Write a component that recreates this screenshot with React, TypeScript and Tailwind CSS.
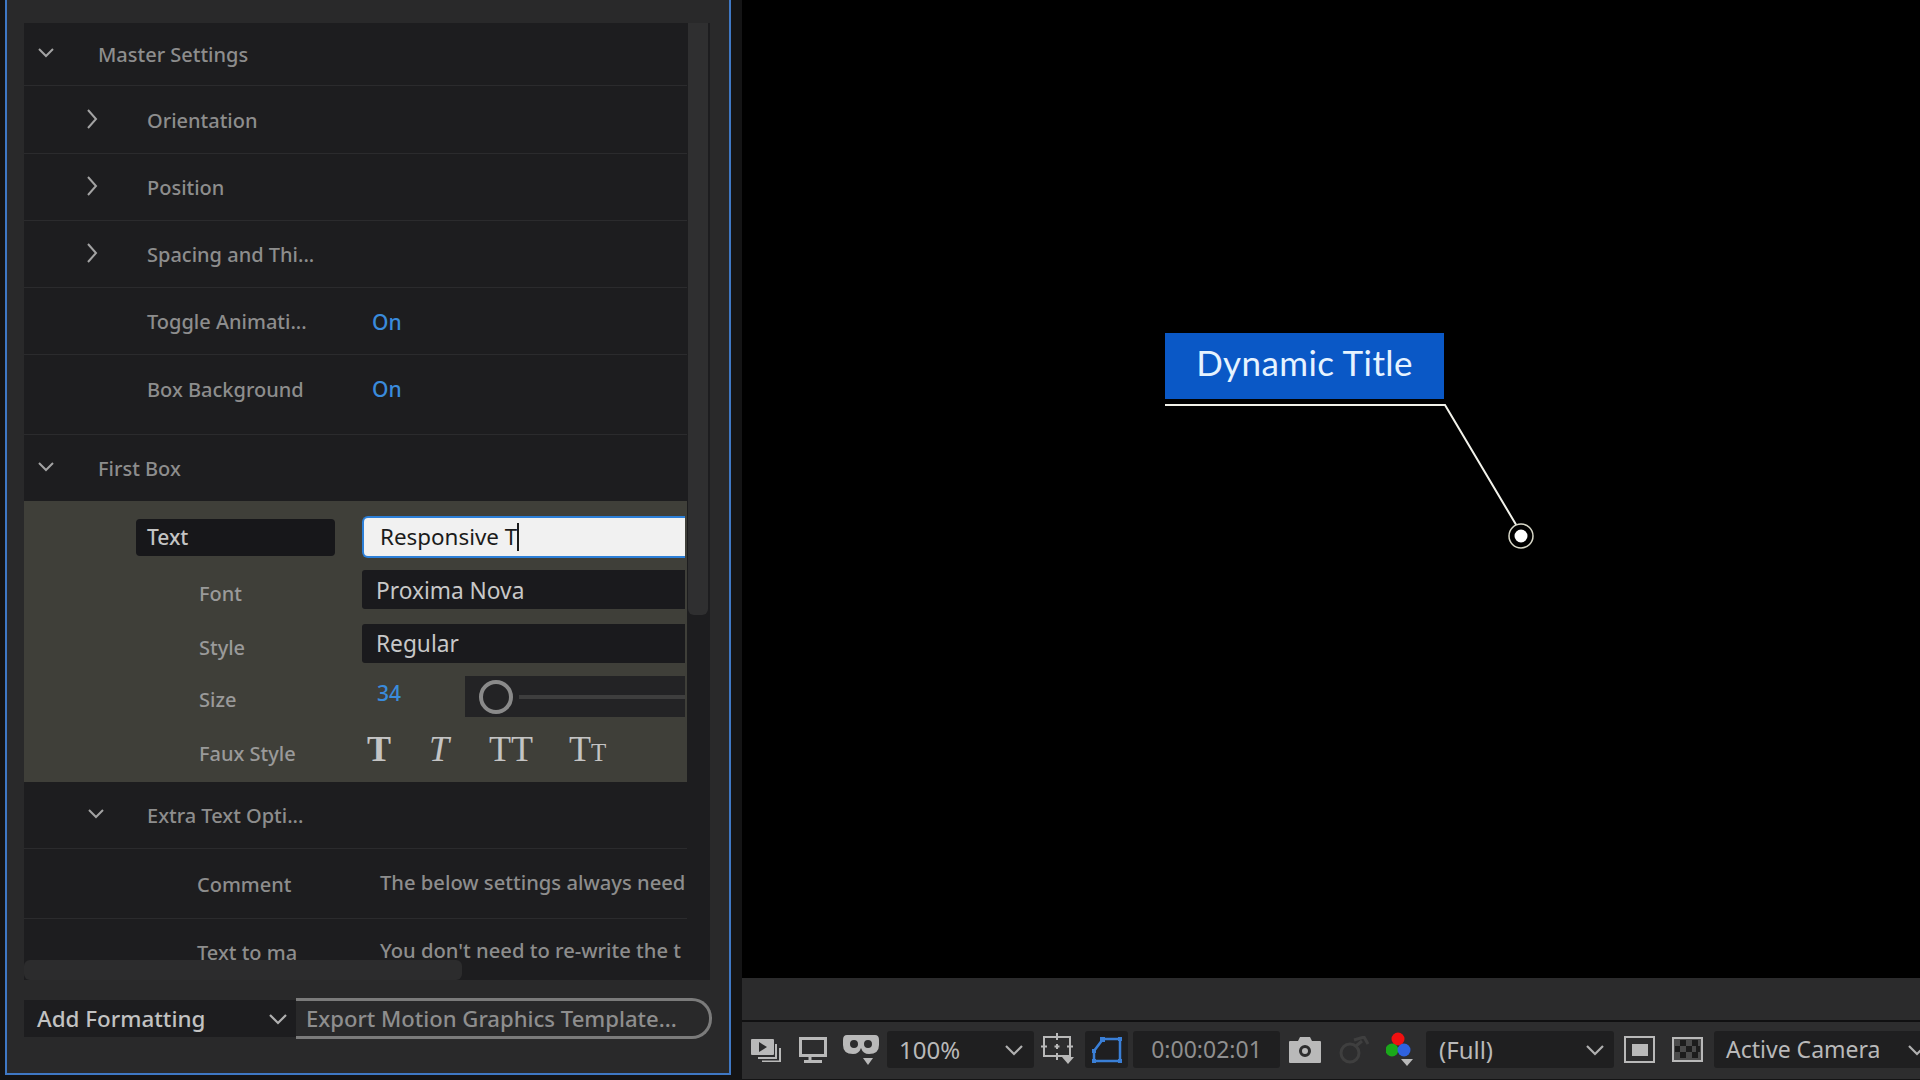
import { ReactNode } from 'react';

const FONT = "font-['Noto_Sans','Open_Sans',sans-serif]";

function Chevron({ down }: { down?: boolean }) {
    return (
        <svg width="20" height="20" viewBox="0 0 20 20" fill="none" stroke="#a3a3a3" strokeWidth="2">
            {down ? <path d="M3 6 L10 13 L17 6" /> : <path d="M6 1 L14 10 L6 19" />}
        </svg>
    );
}

function Row({
    label,
    indent,
    chevronX,
    down,
    height = 67,
    border = true,
    children,
}: {
    label: string;
    indent: string;
    chevronX?: string;
    down?: boolean;
    height?: number;
    border?: boolean;
    children?: ReactNode;
}) {
    return (
        <div
            className={`relative flex items-center shrink-0 ${border ? 'border-b border-[#2b2b2d]' : ''}`}
            style={{ height }}
        >
            {chevronX && (
                <span className={`absolute top-1/2 -translate-y-[11px] ${chevronX}`}>
                    <Chevron down={down} />
                </span>
            )}
            <span className={`text-[20px] font-medium text-[#8d8d8d] whitespace-nowrap pt-[2px] ${indent}`}>{label}</span>
            {children}
        </div>
    );
}

function OnValue() {
    return <span className="absolute left-[348px] text-[21px] font-medium text-[#3a8bdc] pt-[3px]">On</span>;
}

function DownChevronSmall() {
    return (
        <svg width="18" height="12" viewBox="0 0 18 12" fill="none" stroke="#b0b0b0" strokeWidth="2.2">
            <path d="M1 2 L9 10 L17 2" />
        </svg>
    );
}

function Toolbar() {
    return (
        <div className="flex items-center h-[57px] bg-[#2d2d2e] text-[#b9b9b9] overflow-hidden pb-[2px]">
            {/* previews */}
            <svg className="ml-[9px] shrink-0" width="30" height="24" viewBox="0 0 30 24" fill="none">
                <rect x="0" y="1" width="23" height="16" rx="1" fill="#b9b9b9" />
                <path d="M8 4 L16 9 L8 14 Z" fill="#2d2d2e" />
                <path d="M25 6 V20 H7" stroke="#b9b9b9" strokeWidth="2" />
                <path d="M29 10 V23.5 H11" stroke="#b9b9b9" strokeWidth="2" />
            </svg>
            {/* monitor */}
            <svg className="ml-[18px] shrink-0" width="28" height="26" viewBox="0 0 28 26" fill="none">
                <rect x="1.5" y="1.5" width="25" height="17" stroke="#b9b9b9" strokeWidth="3" />
                <path d="M11 19 V23 M5 24.5 H23" stroke="#b9b9b9" strokeWidth="3" />
            </svg>
            {/* goggles */}
            <div className="relative ml-[16px] w-[36px] h-[32px] shrink-0">
                <svg width="36" height="22" viewBox="0 0 36 22">
                    <path
                        fillRule="evenodd"
                        fill="#b9b9b9"
                        d="M4 1 H32 Q36 1 36 6 V11 Q36 20 26 20 Q20 20 18 14 Q16 20 10 20 Q0 20 0 11 V6 Q0 1 4 1 Z M11 6 A4 4 0 1 0 11.01 14 A4 4 0 1 0 11 6 Z M25 6 A4 4 0 1 0 25.01 14 A4 4 0 1 0 25 6 Z"
                    />
                </svg>
                <span className="absolute left-[20px] top-[24px] w-0 h-0 border-x-[5px] border-x-transparent border-t-[7px] border-t-[#b9b9b9]" />
            </div>
            {/* zoom */}
            <div className="ml-[8px] w-[147px] h-[37px] bg-[#1f1f20] rounded-[3px] flex items-center justify-between pl-[12px] pr-[11px] shrink-0">
                <span className="text-[24px] text-[#b9b9b9]">100%</span>
                <DownChevronSmall />
            </div>
            {/* region of interest */}
            <div className="relative ml-[7px] mr-[2px] w-[32px] h-[34px] shrink-0">
                <svg width="32" height="28" viewBox="0 0 32 28" fill="none" stroke="#b9b9b9" strokeWidth="2">
                    <rect x="3" y="4" width="26" height="19" />
                    <path d="M16 0 V7 M16 20 V27 M0 13.5 H6 M26 13.5 H32" strokeWidth="2" />
                    <path d="M16 11 V16 M13.5 13.5 H18.5" />
                </svg>
                <span className="absolute left-[21px] top-[24px] w-0 h-0 border-x-[6px] border-x-transparent border-t-[7px] border-t-[#b9b9b9]" />
            </div>
            {/* mask */}
            <div className="ml-[10px] w-[43px] h-[37px] bg-[#1f1f20] rounded-[3px] flex items-center justify-center shrink-0">
                <svg width="32" height="28" viewBox="0 0 32 28" fill="none" stroke="#3a7fd6" strokeWidth="2.5">
                    <path d="M12 3 H29 V25 H3 V15 Z" />
                    <path d="M9 1 H14 V6 H9 Z M27 1 H31 V5 H27 Z M27 23 H31 V27 H27 Z M1 23 H5 V27 H1 Z M1 13 H5 V17 H1 Z" fill="#3a7fd6" stroke="none" />
                </svg>
            </div>
            {/* time */}
            <div className="ml-[5px] w-[147px] h-[37px] bg-[#1f1f20] rounded-[3px] flex items-center justify-center shrink-0">
                <span className="text-[23px] text-[#8f8f8f]">0:00:02:01</span>
            </div>
            {/* snapshot */}
            <svg className="ml-[9px] mr-[1px] shrink-0" width="32" height="26" viewBox="0 0 32 26">
                <path
                    fillRule="evenodd"
                    fill="#b9b9b9"
                    d="M1 4 H9 L11 0 H21 L23 4 H31 Q32 4 32 5 V25 Q32 26 31 26 H1 Q0 26 0 25 V5 Q0 4 1 4 Z M16 8 A6 6 0 1 0 16.01 20 A6 6 0 1 0 16 8 Z M16 11 A3 3 0 1 1 15.99 17 A3 3 0 1 1 16 11 Z"
                />
            </svg>
            {/* show snapshot */}
            <svg className="ml-[15px] mr-[1px] shrink-0" width="32" height="28" viewBox="0 0 32 28" fill="none" stroke="#3f3f3f" strokeWidth="3">
                <circle cx="13" cy="17" r="9" />
                <path d="M19 10 L25 5 M17 4 L27 1 L31 8" />
            </svg>
            {/* channels */}
            <div className="relative ml-[16px] mr-[2px] w-[25px] h-[36px] shrink-0">
                <svg width="25" height="28" viewBox="0 0 25 28">
                    <circle cx="12" cy="7" r="6.5" fill="#f01010" />
                    <circle cx="6" cy="18" r="6.5" fill="#1aa81a" />
                    <circle cx="18" cy="18" r="6.5" fill="#2f62e0" />
                </svg>
                <span className="absolute left-[15px] top-[27px] w-0 h-0 border-x-[6px] border-x-transparent border-t-[7px] border-t-[#b9b9b9]" />
            </div>
            {/* resolution */}
            <div className="ml-[13px] w-[188px] h-[37px] bg-[#1f1f20] rounded-[3px] flex items-center justify-between pl-[13px] pr-[10px] shrink-0">
                <span className="text-[24px] text-[#b9b9b9]">(Full)</span>
                <DownChevronSmall />
            </div>
            {/* fast preview */}
            <svg className="ml-[10px] shrink-0" width="31" height="27" viewBox="0 0 31 27" fill="none">
                <rect x="1" y="1" width="29" height="25" stroke="#b9b9b9" strokeWidth="2" />
                <rect x="8" y="8" width="16" height="12" fill="#b9b9b9" />
            </svg>
            {/* transparency */}
            <svg className="ml-[17px] shrink-0" width="31" height="25" viewBox="0 0 31 25">
                <rect x="1" y="1" width="29" height="23" fill="#4b4b4b" stroke="#b9b9b9" strokeWidth="2" />
                <path d="M8 3 H14 V9 H8 Z M20 3 H26 V9 H20 Z M14 9 H20 V15 H14 Z M3 9 H8 V15 H3 Z M24 9 H28 V15 H24 Z M8 15 H14 V21 H8 Z M20 15 H26 V21 H20 Z" fill="#1c1c1c" />
            </svg>
            {/* camera */}
            <div className="ml-[11px] h-[37px] flex-1 bg-[#1f1f20] rounded-l-[3px] flex items-center pl-[12px] overflow-hidden">
                <span className="text-[23px] text-[#b9b9b9] whitespace-nowrap">Active Camera</span>
                <span className="ml-[28px] shrink-0">
                    <DownChevronSmall />
                </span>
            </div>
        </div>
    );
}

export default function App() {
    return (
        <div className={`w-[1920px] h-[1080px] flex bg-[#141415] overflow-hidden ${FONT}`}>
            {/* left panel */}
            <div className="ml-[5px] w-[726px] h-[1075px] shrink-0 border-x-2 border-b-2 border-[#3f78c4] bg-[#29292a] flex flex-col">
                <div className="mt-[23px] ml-[17px] w-[686px] h-[957px] bg-[#1d1d1f] flex flex-col shrink-0 relative">
                    <div className="flex flex-1 min-h-0">
                        <div className="w-[663px] overflow-hidden shrink-0">
                            <Row label="Master Settings" indent="pl-[74px]" chevronX="left-[12px]" down height={63} />
                            <Row label="Orientation" indent="pl-[123px]" chevronX="left-[58px]" height={68} />
                            <Row label="Position" indent="pl-[123px]" chevronX="left-[58px]" />
                            <Row label="Spacing and Thi..." indent="pl-[123px]" chevronX="left-[58px]" />
                            <Row label="Toggle Animati..." indent="pl-[123px]" height={67}>
                                <OnValue />
                            </Row>
                            <Row label="Box Background" indent="pl-[123px]" height={67} border={false}>
                                <OnValue />
                            </Row>
                            <div className="h-[13px] border-b border-[#2b2b2d]" />
                            <Row label="First Box" indent="pl-[74px]" chevronX="left-[12px]" down height={66} border={false} />

                            {/* selected group */}
                            <div className="h-[281px] bg-[#3f3f39] flex flex-col">
                                <div className="mt-[15px] h-[42px] flex items-center">
                                    <div className="ml-[112px] w-[199px] h-[37px] bg-[#17171a] rounded-[4px] flex items-center pl-[11px] pt-[2px] text-[21px] font-medium text-[#c4c4c4]">
                                        Text
                                    </div>
                                    <div className="relative ml-[27px] w-[323px] h-[42px] bg-[#f1f1f1] rounded-l-[6px] border-[2px] border-r-0 border-[#2c7fd8] flex items-center pl-[16px] text-[22.4px] text-[#1b1b1b]">
                                        Responsive T
                                        <span className="w-[2px] h-[28px] bg-[#1b1b1b]" />
                                    </div>
                                </div>
                                <div className="mt-[12px] h-[39px] flex items-center">
                                    <span className="pl-[175px] w-[338px] text-[20px] font-medium text-[#9a9a9a] pt-[8px]">Font</span>
                                    <div className="w-[323px] h-[39px] bg-[#1a1a1d] rounded-l-[3px] flex items-center pl-[14px] pt-[4px] text-[22.7px] text-[#c8c8c8]">
                                        Proxima Nova
                                    </div>
                                </div>
                                <div className="mt-[15px] h-[39px] flex items-center">
                                    <span className="pl-[175px] w-[338px] text-[20px] font-medium text-[#9a9a9a] pt-[8px]">Style</span>
                                    <div className="w-[323px] h-[39px] bg-[#1a1a1d] rounded-l-[3px] flex items-center pl-[14px] pt-[2px] text-[22.7px] text-[#c8c8c8]">
                                        Regular
                                    </div>
                                </div>
                                <div className="mt-[13px] h-[41px] flex items-center">
                                    <span className="pl-[175px] w-[338px] text-[20px] font-medium text-[#9a9a9a] pt-[7px]">Size</span>
                                    <span className="w-[103px] pl-[15px] text-[21px] font-medium text-[#3a8bdc] -mt-[5px]">34</span>
                                    <div className="w-[220px] h-[41px] bg-[#232325] flex items-center pl-[14px]">
                                        <span className="w-[34px] h-[34px] rounded-full border-[4px] border-[#8a8a8a] shrink-0" />
                                        <span className="ml-[6px] flex-1 h-[4px] bg-[#3e3e3e]" />
                                    </div>
                                </div>
                                <div className="mt-[14px] h-[34px] flex items-center">
                                    <span className="pl-[175px] w-[338px] text-[20px] font-medium text-[#9a9a9a] pt-[12px]">Faux Style</span>
                                    <div className="flex items-center text-[#c4c4c4] font-['Liberation_Serif',serif] text-[36px] leading-none mt-[2px]">
                                        <span className="ml-[5px] font-bold">T</span>
                                        <span className="ml-[38px] italic">T</span>
                                        <span className="ml-[40px]">TT</span>
                                        <span className="ml-[36px]">
                                            T<span className="text-[25px]">T</span>
                                        </span>
                                    </div>
                                </div>
                            </div>

                            <Row label="Extra Text Opti..." indent="pl-[123px]" chevronX="left-[62px]" down />
                            <Row label="Comment" indent="pl-[173px]" height={70}>
                                <span className="absolute left-[356px] top-[18px] text-[20.2px] font-medium text-[#8d8d8d] whitespace-nowrap">
                                    The below settings always need
                                </span>
                            </Row>
                            <Row label="Text to ma" indent="pl-[173px]" height={66} border={false}>
                                <span className="absolute left-[356px] top-[16px] text-[20.2px] font-medium text-[#8d8d8d] whitespace-nowrap">
                                    You don't need to re-write the t
                                </span>
                            </Row>
                        </div>
                        {/* vertical scrollbar */}
                        <div className="ml-[1px] flex-1 h-full relative">
                            <div className="w-[20px] h-[592px] bg-[#2f2f30] rounded-b-[6px]" />
                        </div>
                    </div>
                    <div className="absolute left-0 bottom-0 w-[438px] h-[20px] bg-[#2c2c2d] rounded-[6px]" />
                </div>

                {/* footer */}
                <div className="mt-[18px] ml-[17px] flex items-center h-[41px]">
                    <div className="w-[272px] h-[37px] bg-[#1d1d1f] flex items-center justify-between pl-[13px] pr-[9px]">
                        <span className="text-[22.4px] font-medium text-[#c2c2c2]">Add Formatting</span>
                        <DownChevronSmall />
                    </div>
                    <div className="w-[416px] h-[41px] border-y-[3px] border-r-[3px] border-[#7b7b7b] rounded-r-[20px] flex items-center pl-[10px]">
                        <span className="text-[22.1px] font-medium text-[#8e8e8e] whitespace-nowrap">Export Motion Graphics Template...</span>
                    </div>
                </div>
            </div>

            {/* comp viewer */}
            <div className="ml-[11px] flex-1 flex flex-col">
                <div className="relative h-[978px] bg-black shrink-0">
                    <div className="absolute left-[423px] top-[333px] w-[279px] h-[66px] bg-[#0a58c6] flex items-center justify-center pb-[7px]">
                        <span className="font-['Lato',sans-serif] text-[35px] tracking-[0.4px] text-[#e6f3ff] whitespace-nowrap">
                            Dynamic Title
                        </span>
                    </div>
                    <svg className="absolute left-[423px] top-[400px]" width="370" height="150" viewBox="0 0 370 150" fill="none">
                        <path d="M0 5 H280 L356 133" stroke="#f2f2ea" strokeWidth="2" />
                        <circle cx="356" cy="136" r="12" stroke="#d8d8c8" strokeWidth="1.5" fill="black" />
                        <circle cx="356" cy="136" r="6.5" fill="#ffffff" />
                    </svg>
                </div>
                <div className="h-[44px] bg-[#2b2b2c] border-b-2 border-[#101011] shrink-0" />
                <Toolbar />
            </div>
        </div>
    );
}
